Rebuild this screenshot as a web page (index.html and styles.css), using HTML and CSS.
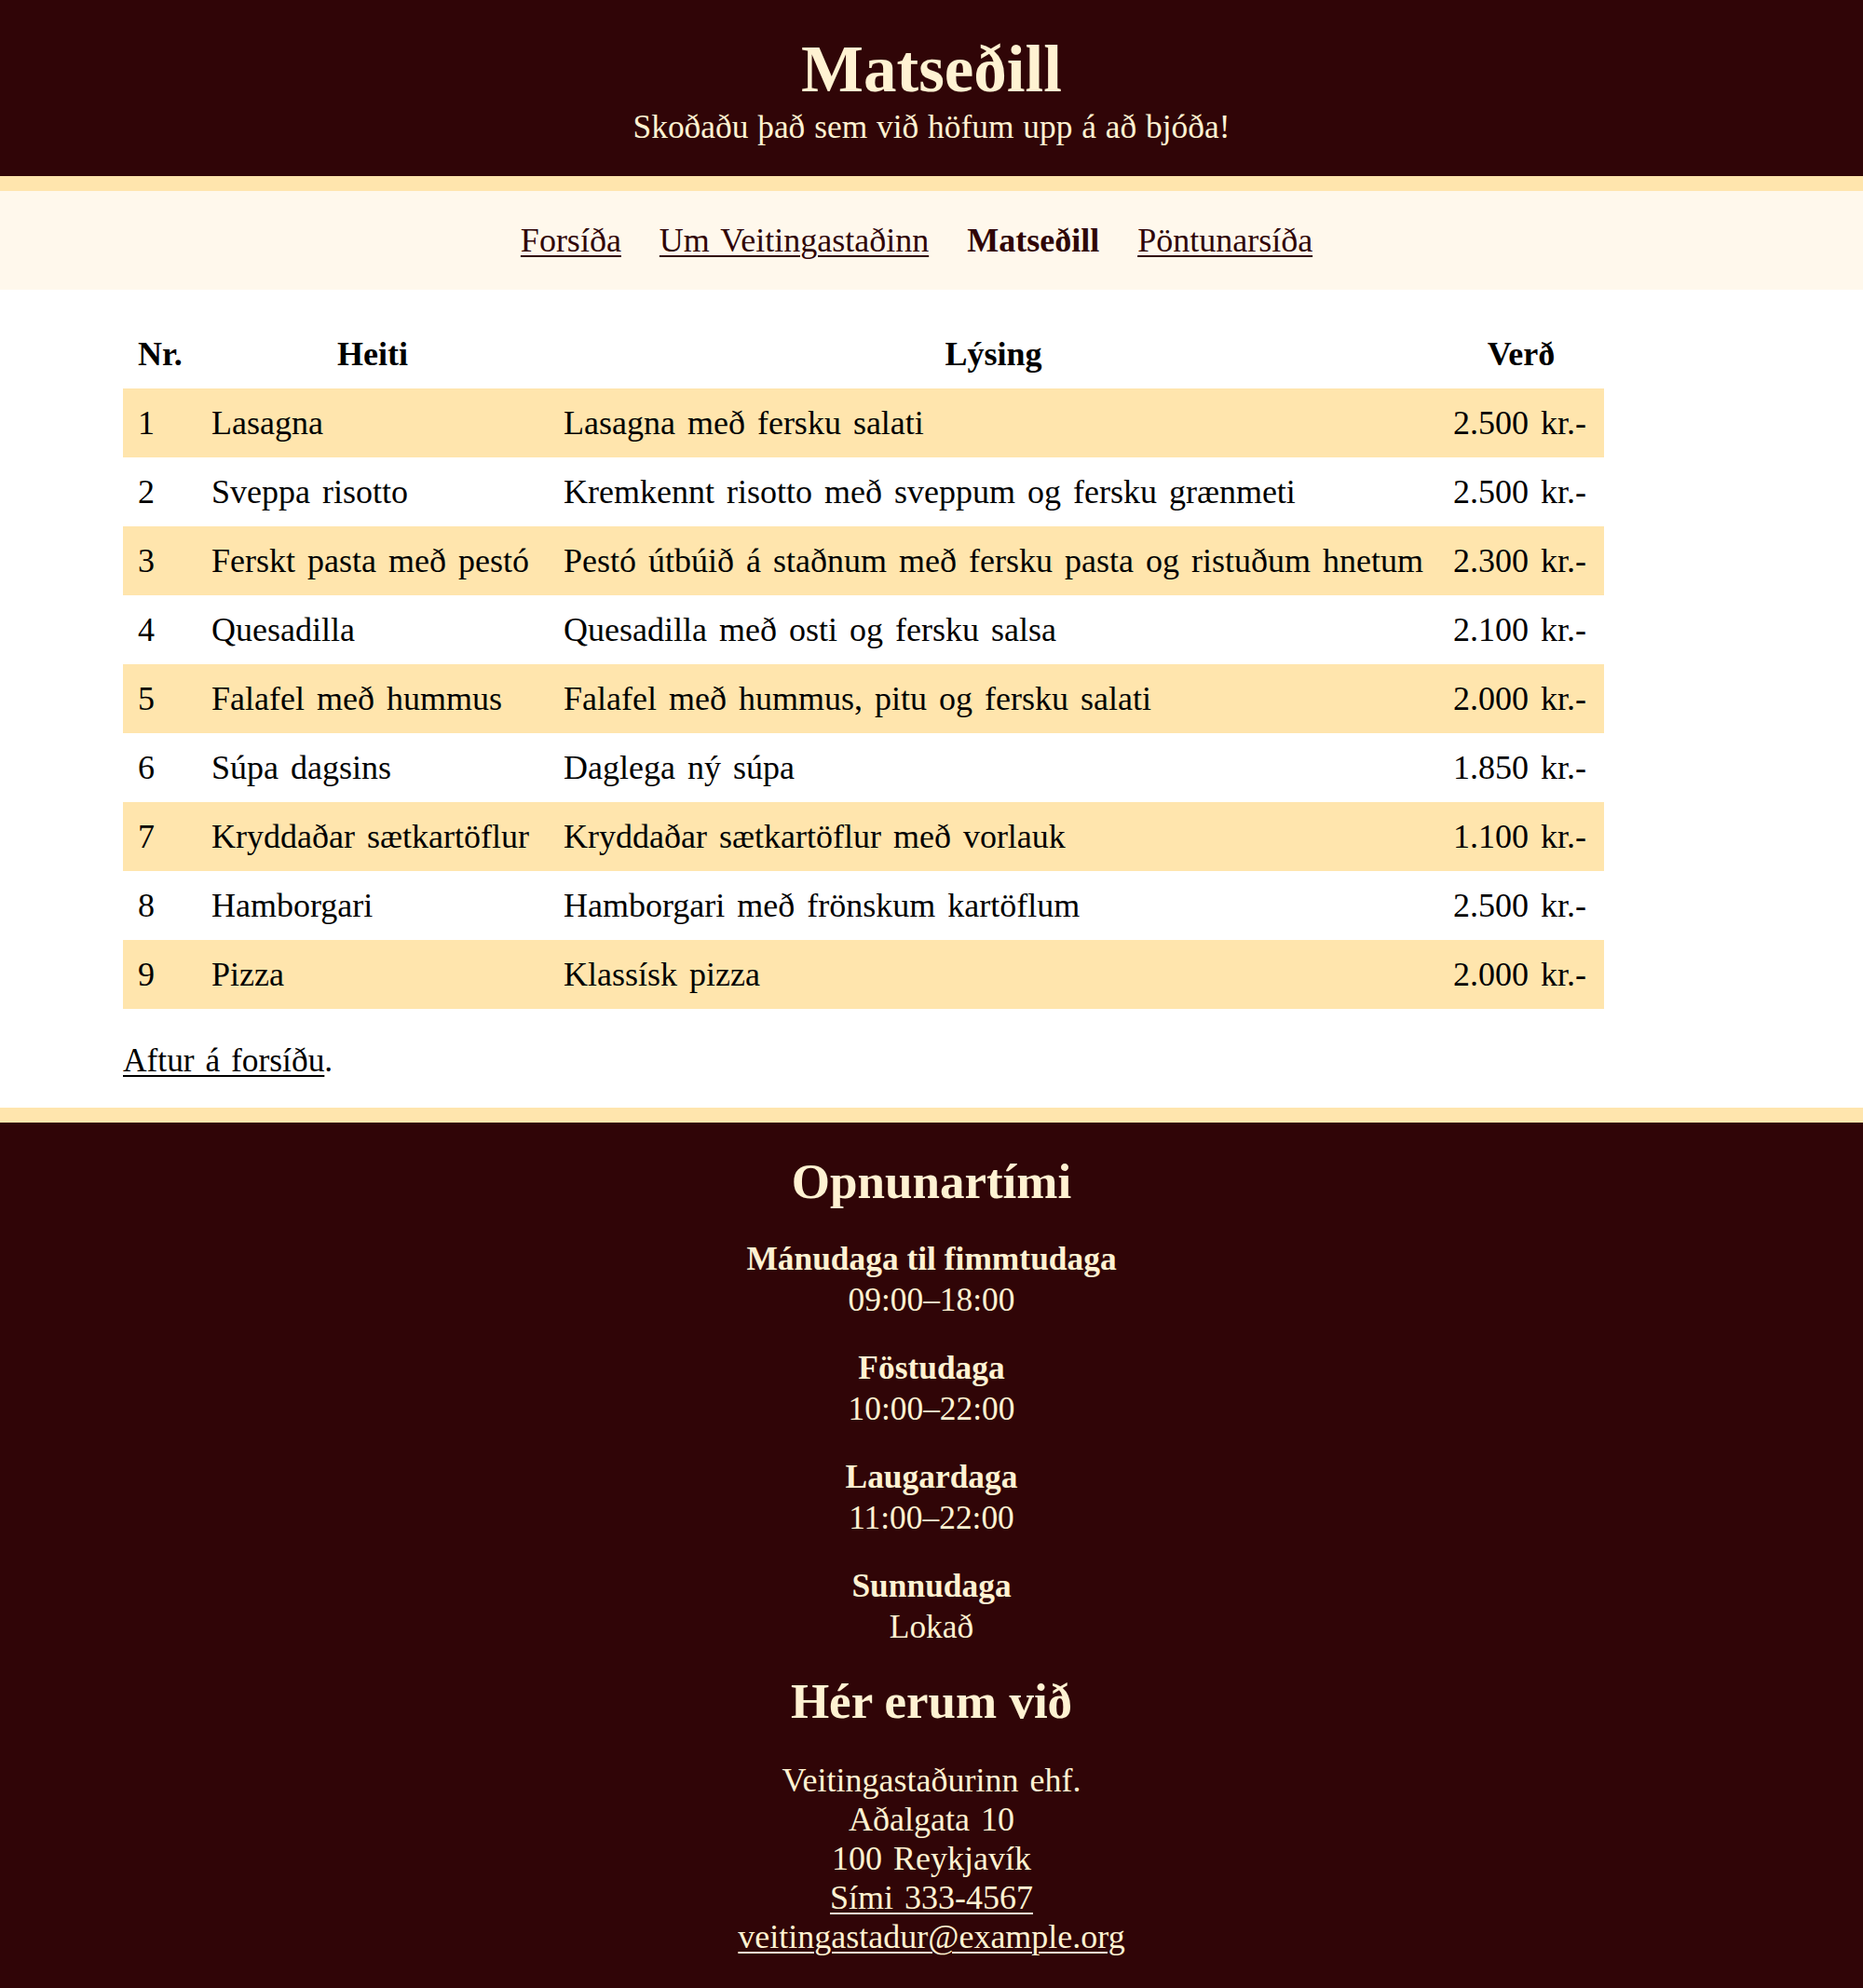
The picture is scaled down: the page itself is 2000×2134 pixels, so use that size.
FILE: index.html
```html
<!DOCTYPE html>
<html lang="is">
<head>
<meta charset="utf-8">
<title>Matseðill</title>
<link rel="stylesheet" href="styles.css">
</head>
<body>
<header class="site-header">
  <h1 class="site-title">Matseðill</h1>
  <p class="site-tagline">Skoðaðu það sem við höfum upp á að bjóða!</p>
</header>
<nav class="site-nav">
  <ul class="nav-list">
    <li><a class="nav-link" href="#">Forsíða</a></li>
    <li><a class="nav-link" href="#">Um Veitingastaðinn</a></li>
    <li><strong class="nav-current">Matseðill</strong></li>
    <li><a class="nav-link" href="#">Pöntunarsíða</a></li>
  </ul>
</nav>
<main class="content">
  <table class="menu">
    <colgroup>
      <col class="col-nr">
      <col class="col-name">
      <col class="col-desc">
      <col class="col-price">
    </colgroup>
    <thead>
      <tr><th>Nr.</th><th>Heiti</th><th>Lýsing</th><th>Verð</th></tr>
    </thead>
    <tbody>
      <tr><td>1</td><td>Lasagna</td><td>Lasagna með fersku salati</td><td>2.500 kr.-</td></tr>
      <tr><td>2</td><td>Sveppa risotto</td><td>Kremkennt risotto með sveppum og fersku grænmeti</td><td>2.500 kr.-</td></tr>
      <tr><td>3</td><td>Ferskt pasta með pestó</td><td>Pestó útbúið á staðnum með fersku pasta og ristuðum hnetum</td><td>2.300 kr.-</td></tr>
      <tr><td>4</td><td>Quesadilla</td><td>Quesadilla með osti og fersku salsa</td><td>2.100 kr.-</td></tr>
      <tr><td>5</td><td>Falafel með hummus</td><td>Falafel með hummus, pitu og fersku salati</td><td>2.000 kr.-</td></tr>
      <tr><td>6</td><td>Súpa dagsins</td><td>Daglega ný súpa</td><td>1.850 kr.-</td></tr>
      <tr><td>7</td><td>Kryddaðar sætkartöflur</td><td>Kryddaðar sætkartöflur með vorlauk</td><td>1.100 kr.-</td></tr>
      <tr><td>8</td><td>Hamborgari</td><td>Hamborgari með frönskum kartöflum</td><td>2.500 kr.-</td></tr>
      <tr><td>9</td><td>Pizza</td><td>Klassísk pizza</td><td>2.000 kr.-</td></tr>
    </tbody>
  </table>
  <p class="back"><a class="back-link" href="#">Aftur á forsíðu</a>.</p>
</main>
<footer class="site-footer">
  <h2 class="footer-title">Opnunartími</h2>
  <p class="hours"><strong>Mánudaga til fimmtudaga</strong><br>09:00–18:00</p>
  <p class="hours"><strong>Föstudaga</strong><br>10:00–22:00</p>
  <p class="hours"><strong>Laugardaga</strong><br>11:00–22:00</p>
  <p class="hours"><strong>Sunnudaga</strong><br>Lokað</p>
  <h2 class="footer-title footer-title-2">Hér erum við</h2>
  <p class="address">Veitingastaðurinn ehf.<br>Aðalgata 10<br>100 Reykjavík<br><a class="footer-link" href="#">Sími 333-4567</a><br><a class="footer-link" href="#">veitingastadur@example.org</a></p>
</footer>
</body>
</html>
```
FILE: styles.css
```css
html, body {
  margin: 0;
  padding: 0;
}
body {
  font-family: "Liberation Serif", "Times New Roman", serif;
  font-size: 35.4px;
  color: #000;
  background: #fff;
}

.site-header {
  background: #300507;
  color: #fff2d2;
  text-align: center;
  padding: 34px 0 31px;
  border-bottom: 16px solid #ffe5ad;
}
.site-title {
  margin: 0;
  font-size: 71px;
  line-height: 80px;
  font-weight: bold;
}
.site-tagline {
  margin: 0;
  line-height: 44px;
  word-spacing: 1px;
}

.site-nav {
  background: #fff8ec;
  padding: 31px 0;
}
.nav-list {
  list-style: none;
  margin: 0;
  padding: 0 32px 0 0;
  display: flex;
  justify-content: center;
  gap: 41px;
  line-height: 44px;
  font-size: 36px;
  word-spacing: 3px;
}
.nav-link {
  color: #300507;
  text-decoration: underline;
  text-decoration-thickness: 2px;
  text-underline-offset: 4px;
}
.nav-current {
  color: #300507;
  font-weight: bold;
}

.content {
  padding: 32px 132px 27px;
}
.menu {
  border-collapse: collapse;
  table-layout: fixed;
  width: 1590px;
  line-height: 48px;
  font-size: 36px;
}
.col-nr { width: 79px; }
.col-name { width: 378px; }
.col-desc { width: 955px; }
.col-price { width: 178px; }
.menu th,
.menu td {
  padding: 13px 16px;
  white-space: nowrap;
}
.menu th {
  text-align: center;
  font-weight: bold;
}
.menu td {
  text-align: left;
  word-spacing: 4px;
}
.menu tbody tr:nth-child(odd) {
  background: #ffe5ad;
}
.back {
  margin: 31px 0 0;
  line-height: 48px;
  word-spacing: 3px;
}
.back-link {
  color: #000;
  text-decoration-thickness: 2px;
  text-underline-offset: 4px;
}

.site-footer {
  background: #300507;
  color: #fff2d2;
  text-align: center;
  border-top: 16px solid #ffe5ad;
  padding: 33px 0 34px;
}
.footer-title {
  margin: 0;
  font-size: 53px;
  line-height: 60px;
  font-weight: bold;
}
.footer-title-2 {
  margin-top: 28px;
}
.hours {
  margin: 29px 0 0;
  line-height: 44px;
}
.footer-title + .hours {
  margin-top: 31px;
}
.address {
  margin: 34px 0 0;
  line-height: 42px;
  font-size: 36px;
  word-spacing: 3px;
}
.footer-link {
  color: #fff2d2;
  text-decoration-thickness: 2px;
  text-underline-offset: 4px;
}
```
